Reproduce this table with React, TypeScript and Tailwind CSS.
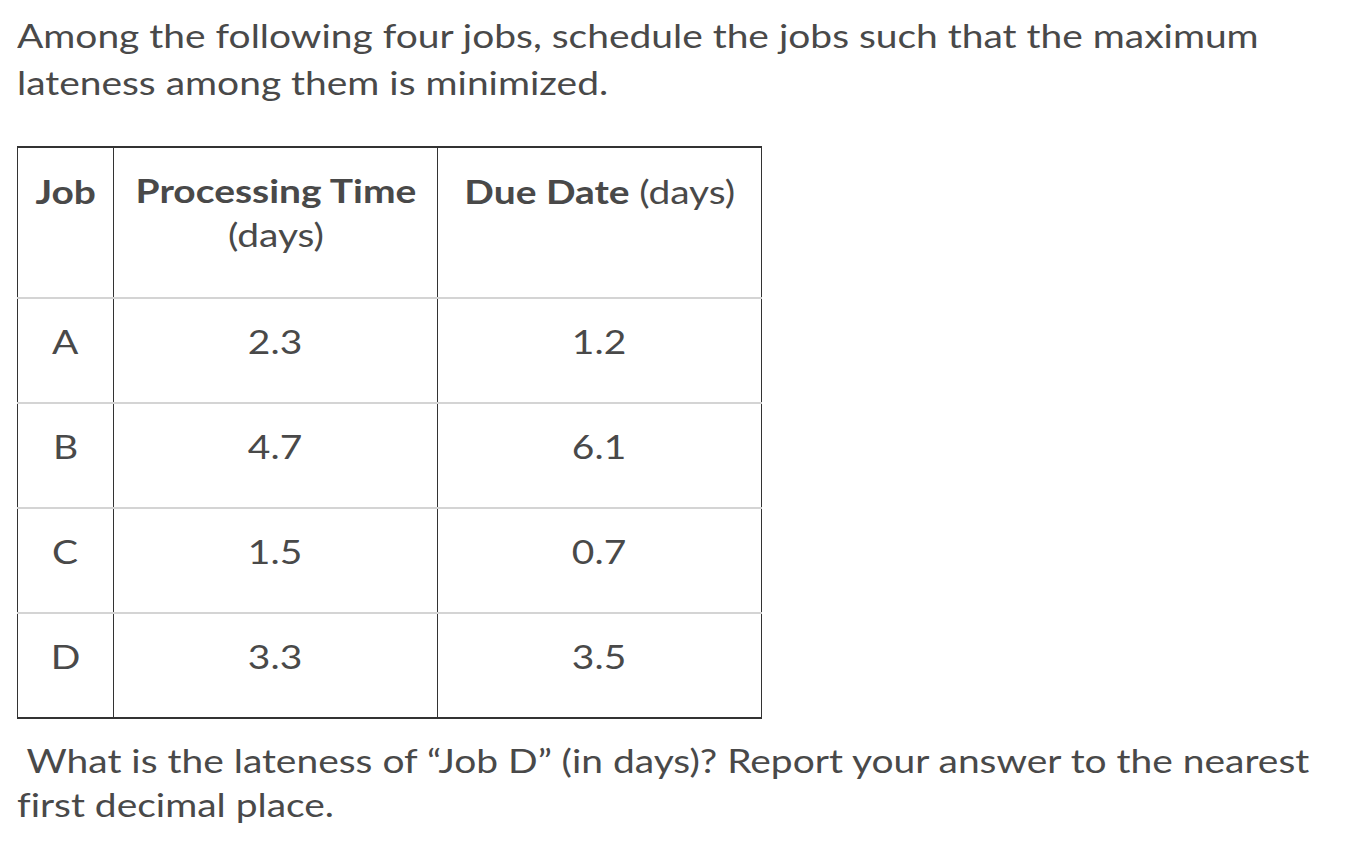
const rows = [
  { job: 'A', time: '2.3', due: '1.2' },
  { job: 'B', time: '4.7', due: '6.1' },
  { job: 'C', time: '1.5', due: '0.7' },
  { job: 'D', time: '3.3', due: '3.5' },
];

// the source text is a touch wider than Lato renders here, so widen it a bit
function Line({ children, center = false }: { children: React.ReactNode; center?: boolean }) {
  return (
    <span className={`inline-block whitespace-nowrap scale-x-[1.18] ${center ? 'origin-center' : 'origin-left'}`}>
      {children}
    </span>
  );
}

export default function App() {
  return (
    <div className="min-h-screen bg-white px-[17px] pt-[12px] text-[#494949] font-['Lato',_'Liberation_Sans',_sans-serif] text-[33px] leading-[46px] [font-variant-ligatures:none]">
      <div className="flex flex-col items-start leading-[47px]">
        <Line>Among the following four jobs, schedule the jobs such that the maximum</Line>
        <Line>lateness among them is minimized.</Line>
      </div>

      <table className="mt-[40px] w-[744px] table-fixed border-collapse border-x border-x-[#333] border-t-2 border-t-[#333] border-b-2 border-b-[#333]">
        <colgroup>
          <col className="w-[96px]" />
          <col className="w-[324px]" />
          <col className="w-[324px]" />
        </colgroup>
        <thead>
          <tr className="h-[151px] border-b-2 border-b-[#d4d4d4]">
            <th className="align-top pt-[20px] text-center font-bold border-r border-r-[#333]">
              <Line center>Job</Line>
            </th>
            <th className="align-top pt-[20px] text-center border-r border-r-[#333] leading-[44px]">
              <Line center>
                <span className="font-bold">Processing Time</span>
                <br />
                <span className="font-normal">(days)</span>
              </Line>
            </th>
            <th className="align-top pt-[20px] text-center">
              <Line center>
                <span className="font-bold">Due Date</span> <span className="font-normal">(days)</span>
              </Line>
            </th>
          </tr>
        </thead>
        <tbody>
          {rows.map((r, i) => (
            <tr key={r.job} className={`h-[105px] ${i < rows.length - 1 ? 'border-b-2 border-b-[#d4d4d4]' : ''}`}>
              <td className="align-top pt-[19px] text-center border-r border-r-[#333]">
                <Line center>{r.job}</Line>
              </td>
              <td className="align-top pt-[19px] text-center border-r border-r-[#333]">
                <Line center>{r.time}</Line>
              </td>
              <td className="align-top pt-[19px] text-center">
                <Line center>{r.due}</Line>
              </td>
            </tr>
          ))}
        </tbody>
      </table>

      <div className="mt-[19px] flex flex-col items-start leading-[44px]">
        <Line>&nbsp;What is the lateness of “Job D” (in days)? Report your answer to the nearest</Line>
        <Line>first decimal place.</Line>
      </div>
    </div>
  );
}
